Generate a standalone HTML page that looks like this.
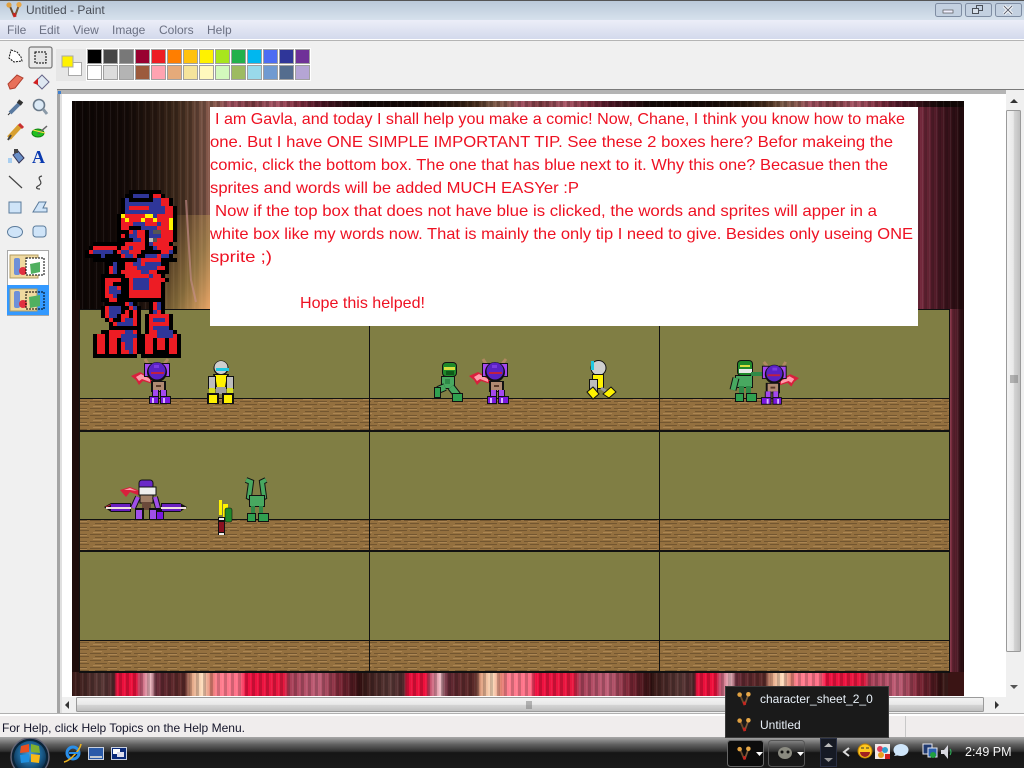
<!DOCTYPE html>
<html lang="en"><head><meta charset="utf-8"><title>Untitled - Paint</title>
<style>html,body{margin:0;padding:0;width:1024px;height:768px;overflow:hidden;background:#f0f0f0}svg{display:block}text{font-family:"Liberation Sans",sans-serif}</style>
</head><body>
<svg xmlns="http://www.w3.org/2000/svg" width="1024" height="768" viewBox="0 0 1024 768">
<defs>
<linearGradient id="title" x1="0" y1="0" x2="0" y2="1"><stop offset="0" stop-color="#b9c8d8"/><stop offset="1" stop-color="#d6e1ec"/></linearGradient>
<linearGradient id="menu" x1="0" y1="0" x2="0" y2="1"><stop offset="0" stop-color="#eceef8"/><stop offset="1" stop-color="#d3d9ec"/></linearGradient>
<linearGradient id="sbv" x1="0" y1="0" x2="1" y2="0"><stop offset="0" stop-color="#f4f4f4"/><stop offset=".5" stop-color="#e8e8e8"/><stop offset=".55" stop-color="#d4d4d4"/><stop offset="1" stop-color="#bdbdbd"/></linearGradient>
<linearGradient id="sbh" x1="0" y1="0" x2="0" y2="1"><stop offset="0" stop-color="#f4f4f4"/><stop offset=".5" stop-color="#e8e8e8"/><stop offset=".55" stop-color="#d4d4d4"/><stop offset="1" stop-color="#bdbdbd"/></linearGradient>
<linearGradient id="task" x1="0" y1="0" x2="0" y2="1"><stop offset="0" stop-color="#a8a8a8"/><stop offset=".25" stop-color="#5e5e5e"/><stop offset=".46" stop-color="#303030"/><stop offset=".5" stop-color="#161616"/><stop offset="1" stop-color="#1a1a1a"/></linearGradient>
<linearGradient id="top" gradientUnits="userSpaceOnUse" x1="72" y1="0" x2="362" y2="0" spreadMethod="repeat">
<stop offset="0" stop-color="#120806"/><stop offset=".2" stop-color="#150a08"/><stop offset=".33" stop-color="#2a1a10"/><stop offset=".4" stop-color="#4a3020"/><stop offset=".45" stop-color="#7a5a48"/><stop offset=".5" stop-color="#8a5a50"/><stop offset=".55" stop-color="#a05060"/><stop offset=".62" stop-color="#7a3a40"/><stop offset=".7" stop-color="#a85868"/><stop offset=".78" stop-color="#803040"/><stop offset=".85" stop-color="#501828"/><stop offset="1" stop-color="#120806"/></linearGradient>
<linearGradient id="bot" gradientUnits="userSpaceOnUse" x1="72" y1="0" x2="362" y2="0" spreadMethod="repeat">
<stop offset="0" stop-color="#3a1a18"/><stop offset=".1" stop-color="#5a3a38"/><stop offset=".145" stop-color="#50282c"/><stop offset=".155" stop-color="#e8103c"/><stop offset=".22" stop-color="#f0103c"/><stop offset=".23" stop-color="#c04060"/><stop offset=".27" stop-color="#f0c0c8"/><stop offset=".29" stop-color="#703040"/><stop offset=".31" stop-color="#602830"/><stop offset=".39" stop-color="#5a2a28"/><stop offset=".41" stop-color="#e0a080"/><stop offset=".45" stop-color="#ffe0c0"/><stop offset=".48" stop-color="#e08070"/><stop offset=".5" stop-color="#ff8090"/><stop offset=".58" stop-color="#ff7088"/><stop offset=".6" stop-color="#f01040"/><stop offset=".73" stop-color="#e81840"/><stop offset=".75" stop-color="#a84058"/><stop offset=".85" stop-color="#c06078"/><stop offset=".92" stop-color="#802838"/><stop offset="1" stop-color="#301010"/></linearGradient>
<linearGradient id="leftg" x1="0" y1="0" x2="1" y2="0"><stop offset="0" stop-color="#0c0504"/><stop offset=".4" stop-color="#150b08"/><stop offset=".62" stop-color="#2a1a12"/><stop offset=".75" stop-color="#3e2a1c"/><stop offset=".85" stop-color="#54392a"/><stop offset=".95" stop-color="#775244"/><stop offset="1" stop-color="#8a5a4c"/></linearGradient>
<linearGradient id="leftlow" x1="0" y1="0" x2="1" y2="1"><stop offset="0" stop-color="#c09050" stop-opacity="0"/><stop offset=".6" stop-color="#b89a50" stop-opacity=".55"/><stop offset="1" stop-color="#f0a868" stop-opacity=".95"/></linearGradient>
<linearGradient id="rightg" x1="0" y1="0" x2="1" y2="0"><stop offset="0" stop-color="#7a2c40"/><stop offset=".45" stop-color="#4a1824"/><stop offset="1" stop-color="#200a0c"/></linearGradient>
<linearGradient id="rightb" x1="0" y1="0" x2="1" y2="0"><stop offset="0" stop-color="#8a3448"/><stop offset=".5" stop-color="#501c28"/><stop offset="1" stop-color="#200a0c"/></linearGradient>
<pattern id="streak" width="7" height="11" patternUnits="userSpaceOnUse"><rect width="3" height="11" fill="#000" opacity=".18"/><rect x="5" width="1" height="11" fill="#fff" opacity=".06"/></pattern>
<pattern id="brick" width="30" height="7" patternUnits="userSpaceOnUse"><rect width="30" height="7" fill="#94703f"/><rect y="2" width="11" height="1" fill="#735630"/><rect x="14" y="2" width="13" height="1" fill="#735630"/><rect x="5" y="5" width="12" height="1" fill="#735630"/><rect x="20" y="5" width="9" height="1" fill="#735630"/><rect x="3" y="0" width="9" height="1" fill="#ab8552"/><rect x="18" y="3" width="9" height="1" fill="#ab8552"/></pattern>
<radialGradient id="orb" cx=".5" cy=".4" r=".6"><stop offset="0" stop-color="#4a9ad0"/><stop offset=".6" stop-color="#1b5f90"/><stop offset="1" stop-color="#0b2c48"/></radialGradient>
<clipPath id="tb"><rect x="0" y="738" width="100" height="30"/></clipPath>

<symbol id="pb" viewBox="0 0 16 16" overflow="visible">
<path d="M3 2 8 14" stroke="#6b4a2a" stroke-width="2"/><path d="M13 3 9 14" stroke="#7a5a3a" stroke-width="2"/><path d="M8 11 9 15" stroke="#c8231f" stroke-width="3"/>
<circle cx="3" cy="3" r="2.6" fill="#e0a040"/><circle cx="13" cy="2.6" r="2.6" fill="#e8a848"/>
</symbol>

<symbol id="gavla" viewBox="0 0 40 46" overflow="visible">
<polygon points="0,18 9,14 21,20 22,26 12,23 8,27 5,22" fill="#d8203c"/><polygon points="5,19 10,16 19,21 19,24 11,21 8,23" fill="#ff9caa"/>
<path d="M14 1l3 5M37 1l-4 5" stroke="#b08860" stroke-width="3"/>
<rect x="13" y="5" width="8" height="14" fill="#111"/><rect x="14" y="6" width="6" height="12" fill="#a448f0"/>
<rect x="31" y="5" width="8" height="14" fill="#111"/><rect x="32" y="6" width="6" height="12" fill="#a448f0"/>
<circle cx="26" cy="14" r="10" fill="#111"/><circle cx="26" cy="13" r="8.5" fill="#5a22c4"/><rect x="20" y="14" width="13" height="2" fill="#c02040"/><rect x="23" y="7" width="5" height="3" fill="#7a3ae0"/>
<rect x="20" y="23" width="15" height="11" fill="#111"/><rect x="22" y="24" width="11" height="9" fill="#b08a72"/><rect x="25" y="27" width="5" height="2" fill="#5a3a2a"/>
<rect x="21" y="32" width="7" height="9" fill="#111"/><rect x="22" y="32" width="5" height="8" fill="#a448f0"/><rect x="29" y="32" width="7" height="9" fill="#111"/><rect x="30" y="32" width="5" height="8" fill="#a448f0"/>
<rect x="18" y="38" width="10" height="8" fill="#111"/><rect x="19" y="39" width="8" height="6" fill="#7a18e0"/><rect x="21" y="40" width="2" height="5" fill="#d8b0ff"/>
<rect x="29" y="38" width="11" height="8" fill="#111"/><rect x="30" y="39" width="9" height="6" fill="#7a18e0"/><rect x="32" y="40" width="2" height="5" fill="#d8b0ff"/>
</symbol>

<symbol id="yel" viewBox="0 0 28 44" overflow="visible">
<circle cx="14" cy="8" r="7.5" fill="#111"/><circle cx="14" cy="7.5" r="6.5" fill="#cfcfcf"/><rect x="9" y="8" width="13" height="3" fill="#22c8e0"/>
<polygon points="6,14 22,14 19,28 9,28" fill="#111"/><polygon points="8,15 20,15 18,27 10,27" fill="#fff200"/>
<rect x="1" y="16" width="8" height="13" fill="#111"/><rect x="2" y="17" width="6" height="11" fill="#bdbdbd"/><rect x="19" y="16" width="8" height="13" fill="#111"/><rect x="20" y="17" width="6" height="11" fill="#bdbdbd"/>
<rect x="2" y="28" width="6" height="5" fill="#d8e020"/><rect x="20" y="28" width="6" height="5" fill="#d8e020"/>
<rect x="9" y="27" width="10" height="7" fill="#a0a0a0"/>
<rect x="0" y="33" width="12" height="11" fill="#111"/><rect x="2" y="35" width="8" height="8" fill="#fff200"/><rect x="15" y="33" width="12" height="11" fill="#111"/><rect x="17" y="35" width="8" height="8" fill="#fff200"/>
</symbol>

<symbol id="grn" viewBox="0 0 30 40" overflow="visible">
<rect x="8" y="0" width="15" height="15" rx="4" fill="#111"/><rect x="9" y="1" width="13" height="13" rx="3" fill="#1f8a2a"/><rect x="10" y="5" width="11" height="3" fill="#d8e040"/><rect x="12" y="9" width="8" height="4" fill="#0f5a1a"/>
<rect x="7" y="14" width="14" height="13" fill="#111"/><rect x="8" y="15" width="12" height="11" fill="#48a860"/><rect x="11" y="17" width="5" height="5" fill="#2f8a48"/>
<path d="M11 25 4 28" stroke="#111" stroke-width="8"/><path d="M11 25 4 28" stroke="#48a860" stroke-width="6"/>
<path d="M17 25 24 34" stroke="#111" stroke-width="8"/><path d="M17 25 24 34" stroke="#48a860" stroke-width="6"/>
<rect x="0" y="25" width="7" height="11" fill="#111"/><rect x="1" y="26" width="5" height="9" fill="#30a050"/>
<rect x="18" y="31" width="11" height="9" fill="#111"/><rect x="19" y="32" width="9" height="7" fill="#30a050"/>
</symbol>
</defs>

<!-- base -->
<rect width="1024" height="768" fill="#f0f0f0"/>
<rect width="1024" height="20" fill="url(#title)"/>
<rect width="1024" height="1" fill="#555"/>
<rect y="20" width="1024" height="19" fill="url(#menu)"/>
<rect y="39" width="1024" height="1" fill="#fff"/>
<rect y="40" width="1024" height="1" fill="#b4b4b4"/>
<use href="#pb" x="6" y="2" width="16" height="16"/>
<text x="26" y="14" font-size="12" fill="#4a4f58">Untitled - Paint</text>
<g font-size="12" fill="#6b7082">
<text x="7" y="34">File</text><text x="39" y="34">Edit</text><text x="73" y="34">View</text><text x="112" y="34">Image</text><text x="159" y="34">Colors</text><text x="207" y="34">Help</text>
</g>
<!-- window buttons -->
<g fill="#c3d0e0" stroke="#7f8da3"><rect x="935.5" y="3.5" width="26" height="13" rx="2"/><rect x="965.5" y="3.5" width="26" height="13" rx="2"/><rect x="995.5" y="3.5" width="26" height="13" rx="2"/></g>
<rect x="943" y="10" width="10" height="3" fill="#eef" stroke="#555" stroke-width=".7"/>
<g fill="none" stroke="#4a4f58"><rect x="976.5" y="5.5" width="6" height="5"/><rect x="972.5" y="8.5" width="6" height="5" fill="#d8e0ea"/></g>
<path d="M1004 6 1012 14M1012 6 1004 14" stroke="#fff" stroke-width="3"/><path d="M1004 6 1012 14M1012 6 1004 14" stroke="#5a6070" stroke-width="1"/>

<!-- palette -->
<rect x="86" y="48" width="225" height="33" fill="#fff"/>
<rect x="56" y="49" width="30" height="32" fill="#e6e6e6"/>
<rect x="68.5" y="62.5" width="13" height="13" fill="#fff" stroke="#a8a8a8"/>
<rect x="62" y="56" width="11" height="11" fill="#fff200" stroke="#a8a8a8"/>
<g stroke="#a0a0a0" shape-rendering="crispEdges">
<rect x="87.5" y="49.5" width="14" height="14" fill="#000"/><rect x="103.5" y="49.5" width="14" height="14" fill="#464646"/><rect x="119.5" y="49.5" width="14" height="14" fill="#787878"/><rect x="135.5" y="49.5" width="14" height="14" fill="#990030"/><rect x="151.5" y="49.5" width="14" height="14" fill="#ed1c24"/><rect x="167.5" y="49.5" width="14" height="14" fill="#ff7e00"/><rect x="183.5" y="49.5" width="14" height="14" fill="#ffc20e"/><rect x="199.5" y="49.5" width="14" height="14" fill="#fff200"/><rect x="215.5" y="49.5" width="14" height="14" fill="#a8e61d"/><rect x="231.5" y="49.5" width="14" height="14" fill="#22b14c"/><rect x="247.5" y="49.5" width="14" height="14" fill="#00b7ef"/><rect x="263.5" y="49.5" width="14" height="14" fill="#4d6df3"/><rect x="279.5" y="49.5" width="14" height="14" fill="#2f3699"/><rect x="295.5" y="49.5" width="14" height="14" fill="#6f3198"/>
<rect x="87.5" y="65.5" width="14" height="14" fill="#fff"/><rect x="103.5" y="65.5" width="14" height="14" fill="#dcdcdc"/><rect x="119.5" y="65.5" width="14" height="14" fill="#b4b4b4"/><rect x="135.5" y="65.5" width="14" height="14" fill="#9c5a3c"/><rect x="151.5" y="65.5" width="14" height="14" fill="#ffa3b1"/><rect x="167.5" y="65.5" width="14" height="14" fill="#e5aa7a"/><rect x="183.5" y="65.5" width="14" height="14" fill="#f5e49c"/><rect x="199.5" y="65.5" width="14" height="14" fill="#fff9bd"/><rect x="215.5" y="65.5" width="14" height="14" fill="#d3f9bc"/><rect x="231.5" y="65.5" width="14" height="14" fill="#9dbb61"/><rect x="247.5" y="65.5" width="14" height="14" fill="#99d9ea"/><rect x="263.5" y="65.5" width="14" height="14" fill="#709ad1"/><rect x="279.5" y="65.5" width="14" height="14" fill="#546d8e"/><rect x="295.5" y="65.5" width="14" height="14" fill="#b5a5d5"/>
</g>

<!-- left toolbar edge (starts at canvas top) -->
<rect x="57" y="89" width="3" height="624" fill="#a4a4a4"/><rect x="60" y="94" width="2" height="619" fill="#e0e0e0"/>
<!-- canvas area -->
<rect x="57" y="90" width="949" height="4" fill="#b4b4b4"/>
<rect x="57" y="89" width="967" height="1" fill="#7a7a7a"/>
<rect x="62" y="94" width="944" height="603" fill="#fff"/>
<rect x="58" y="91" width="3" height="3" fill="#3d7fd0"/>

<!-- image -->
<rect x="72" y="101" width="892" height="595" fill="url(#top)"/>
<rect x="72" y="101" width="892" height="595" fill="url(#streak)"/>
<rect x="72" y="101" width="138" height="210" fill="url(#leftg)"/>
<rect x="72" y="101" width="138" height="210" fill="url(#streak)"/>
<rect x="165" y="215" width="45" height="95" fill="url(#leftlow)"/>
<path d="M186 200 191 280 196 302" stroke="#c89090" stroke-width="2" fill="none" opacity=".6"/>
<rect x="72" y="300" width="8" height="380" fill="#1d0c0b"/>
<rect x="918" y="107" width="46" height="204" fill="url(#rightg)"/>
<rect x="918" y="107" width="46" height="204" fill="url(#streak)"/>
<rect x="949" y="309" width="15" height="373" fill="url(#rightb)"/>
<rect x="949" y="309" width="15" height="373" fill="url(#streak)"/>
<rect x="72" y="672" width="892" height="24" fill="url(#bot)"/>
<rect x="72" y="672" width="892" height="24" fill="url(#streak)"/>
<rect x="948" y="672" width="16" height="24" fill="#3a1414"/>

<!-- panels -->
<g shape-rendering="crispEdges">
<rect x="80" y="309" width="869" height="363" fill="#807e44"/>
<rect x="80" y="399" width="869" height="31" fill="url(#brick)"/>
<rect x="80" y="519" width="869" height="31" fill="url(#brick)"/>
<rect x="80" y="641" width="869" height="30" fill="url(#brick)"/>
<g fill="#111">
<rect x="79" y="309" width="871" height="1"/><rect x="79" y="398" width="871" height="1"/><rect x="79" y="430" width="871" height="2"/><rect x="79" y="519" width="871" height="1"/><rect x="79" y="550" width="871" height="2"/><rect x="79" y="640" width="871" height="1"/><rect x="79" y="671" width="871" height="2"/>
<rect x="79" y="309" width="1" height="364"/><rect x="369" y="309" width="1" height="364"/><rect x="659" y="309" width="1" height="364"/><rect x="949" y="309" width="1" height="364"/>
</g>
</g>

<!-- speech box -->
<rect x="210" y="107" width="708" height="219" fill="#fff"/>
<g font-size="16" fill="#ee1122">
<text x="215" y="124" textLength="690" lengthAdjust="spacingAndGlyphs">I am Gavla, and today I shall help you make a comic! Now, Chane, I think you know how to make</text>
<text x="210" y="147" textLength="683" lengthAdjust="spacingAndGlyphs">one. But I have ONE SIMPLE IMPORTANT TIP. See these 2 boxes here? Befor makeing the</text>
<text x="210" y="170" textLength="678" lengthAdjust="spacingAndGlyphs">comic, click the bottom box. The one that has blue next to it. Why this one? Becasue then the</text>
<text x="210" y="193" textLength="369" lengthAdjust="spacingAndGlyphs">sprites and words will be added MUCH EASYer :P</text>
<text x="215" y="216" textLength="662" lengthAdjust="spacingAndGlyphs">Now if the top box that does not have blue is clicked, the words and sprites will apper in a</text>
<text x="210" y="239" textLength="703" lengthAdjust="spacingAndGlyphs">white box like my words now. That is mainly the only tip I need to give. Besides only useing ONE</text>
<text x="210" y="262" textLength="62" lengthAdjust="spacingAndGlyphs">sprite ;)</text>
<text x="300" y="308" textLength="125" lengthAdjust="spacingAndGlyphs">Hope this helped!</text>
</g>

<!-- big robot -->
<g transform="translate(85 190) scale(4)" fill="none" stroke-width="1">
<path stroke="#000" d="M11 .5h8M10 1.5h10M9 2.5h13M9 3.5h13M9 4.5h14M9 5.5h14M8 6.5h15M8 7.5h15M8 8.5h15M8 9.5h15M8 10.5h15M8 11.5h15M8 12.5h15M2 13.5h20M1 14.5h22M0 15.5h23M0 16.5h22M2 17.5h21M5 18.5h16M5 19.5h16M5 20.5h16M4 21.5h16M4 22.5h17M4 23.5h16M4 24.5h16M4 25.5h16M4 26.5h16M4 27.5h16M5 28.5h8M16 28.5h4M4 29.5h10M16 29.5h4M4 30.5h10M16 30.5h4M4 31.5h10M15 31.5h7M5 32.5h9M15 32.5h7M6 33.5h8M15 33.5h7M6 34.5h8M15 34.5h7M4 35.5h10M15 35.5h8M2 36.5h22M2 37.5h22M2 38.5h22M2 39.5h22M2 40.5h22M2 41.5h11M14 41.5h10"/>
<path stroke="#ed1c24" d="M17 1.5h2M19 2.5h2M19 3.5h2M11 4.5h5M20 4.5h2M20 5.5h2M10 6.5h5M18 6.5h4M9 7.5h1M11 7.5h3M15 7.5h2M18 7.5h3M9 8.5h3M15 8.5h3M19 8.5h2M9 9.5h2M18 9.5h3M11 10.5h1M13 10.5h2M19 10.5h3M9 11.5h1M13 11.5h2M19 11.5h3M14 12.5h1M18 12.5h4M10 13.5h5M17 13.5h4M2 14.5h6M9 14.5h2M12 14.5h3M18 14.5h4M1 15.5h1M8 15.5h1M11 15.5h3M19 15.5h2M9 16.5h1M12 16.5h1M18 16.5h1M14 17.5h5M10 18.5h2M14 18.5h1M6 19.5h1M10 19.5h3M18 19.5h2M6 20.5h1M9 20.5h5M16 20.5h2M10 21.5h6M17 21.5h2M5 22.5h4M11 22.5h1M16 22.5h4M5 23.5h2M11 23.5h1M16 23.5h3M5 24.5h1M8 24.5h1M11 24.5h1M16 24.5h3M5 25.5h1M11 25.5h8M5 26.5h2M11 26.5h8M6 27.5h2M10 28.5h1M17 28.5h1M5 29.5h1M11 29.5h1M17 29.5h1M5 30.5h1M10 30.5h1M12 30.5h1M18 30.5h1M5 31.5h1M9 31.5h2M12 31.5h1M16 31.5h5M6 32.5h1M9 32.5h1M12 32.5h1M16 32.5h1M20 32.5h1M7 33.5h1M12 33.5h1M16 33.5h5M16 34.5h1M6 35.5h4M12 35.5h1M16 35.5h2M3 36.5h2M6 36.5h3M15 36.5h3M22 36.5h1M3 37.5h2M6 37.5h2M12 37.5h1M15 37.5h2M18 37.5h2M21 37.5h2M3 38.5h2M6 38.5h2M9 38.5h1M12 38.5h1M15 38.5h2M18 38.5h2M21 38.5h2M3 39.5h2M6 39.5h2M9 39.5h1M12 39.5h1M15 39.5h2M18 39.5h2M21 39.5h2M3 40.5h2M6 40.5h2M9 40.5h2M12 40.5h1M15 40.5h2M21 40.5h2"/>
<path stroke="#2f3699" d="M12 1.5h4M10 2.5h1M17 2.5h2M10 3.5h9M10 4.5h1M16 4.5h4M10 5.5h10M17 6.5h1M12 8.5h3M18 8.5h1M14 9.5h4M12 10.5h1M16 10.5h1M11 11.5h2M16 11.5h3M12 12.5h2M16 13.5h1M11 14.5h1M17 14.5h1M2 15.5h5M9 15.5h2M21 15.5h1M4 16.5h1M10 16.5h2M15 16.5h3M19 16.5h2M13 17.5h1M7 18.5h1M12 18.5h2M15 18.5h4M7 19.5h1M13 19.5h5M7 20.5h1M14 20.5h2M16 21.5h1M12 22.5h4M12 23.5h4M6 24.5h2M12 24.5h4M6 25.5h3M7 26.5h1M11 28.5h1M18 28.5h1M6 29.5h3M12 29.5h1M18 29.5h1M6 30.5h3M17 30.5h1M6 31.5h2M10 32.5h2M17 32.5h3M8 33.5h4M17 34.5h4M10 35.5h2M18 35.5h4M9 36.5h4M18 36.5h4M9 37.5h3M10 38.5h2M10 39.5h2M11 40.5h1"/>
<path stroke="#fff200" d="M9 6.5h1M15 6.5h2M10 7.5h1M14 7.5h1M17 7.5h1M21 7.5h1M21 8.5h1M21 9.5h1"/>
<path stroke="#555" d="M17 10.5h2M17 12.5h1"/>
<path stroke="#bdbdbd" d="M16 12.5h1"/>
</g>

<!-- sprites -->
<use href="#gavla" x="131" y="358" width="40" height="46"/>
<use href="#yel" x="207" y="360" width="28" height="44"/>
<use href="#grn" x="434" y="362" width="30" height="40"/>
<use href="#gavla" x="469" y="358" width="40" height="46"/>
<!-- yellow walking -->
<g>
<circle cx="598.500" cy="368" r="8" fill="#111"/><circle cx="598.500" cy="368" r="7" fill="#cfcfcf"/><rect x="591" y="361" width="3" height="9" fill="#22c8e0"/>
<rect x="592" y="374" width="12" height="15" fill="#111"/><rect x="593" y="375" width="10" height="13" fill="#fff200"/>
<rect x="589" y="379" width="9" height="13" fill="#111"/><rect x="590" y="380" width="7" height="11" fill="#bdbdbd"/>
<path d="M596 388 592 392" stroke="#999" stroke-width="3"/><path d="M601 388 607 392" stroke="#999" stroke-width="3"/>
<polygon points="587,392 593,387 599,394 593,399" fill="#fff200" stroke="#111"/><polygon points="603,394 611,387 616,392 609,398" fill="#fff200" stroke="#111"/>
</g>
<!-- green big, right panel -->
<g>
<rect x="737" y="360" width="16" height="16" rx="4" fill="#111"/><rect x="738" y="361" width="14" height="14" rx="3" fill="#1f8a2a"/><rect x="739" y="369" width="13" height="4" fill="#e8e8e8"/><rect x="740" y="365" width="10" height="2" fill="#d8e040"/>
<rect x="735" y="375" width="18" height="13" fill="#111"/><rect x="736" y="376" width="16" height="11" fill="#48a860"/>
<rect x="751" y="372" width="15" height="4" fill="#2f8a48"/>
<path d="M736 378 733 390" stroke="#111" stroke-width="7"/><path d="M736 378 733 390" stroke="#48a860" stroke-width="5"/>
<rect x="739" y="386" width="5" height="8" fill="#2f8a48"/><rect x="746" y="386" width="5" height="8" fill="#2f8a48"/>
<rect x="735" y="393" width="9" height="9" fill="#111"/><rect x="736" y="394" width="7" height="7" fill="#30a050"/><rect x="746" y="393" width="11" height="9" fill="#111"/><rect x="747" y="394" width="9" height="7" fill="#30a050"/>
</g>
<g transform="translate(799 361) scale(-.95 .95)"><use href="#gavla" x="0" y="0" width="40" height="46"/></g>
<!-- hooded gavla with blades -->
<polygon points="120,490 130,487 140,491 138,495 130,492 126,497" fill="#d8203c"/><polygon points="124,490 130,488 137,491 130,490" fill="#ff9caa"/>
<rect x="139" y="480" width="14" height="9" rx="3" fill="#6a28c8" stroke="#111"/><rect x="139" y="487" width="17" height="8" fill="#eee" stroke="#111"/>
<rect x="140" y="495" width="13" height="8" fill="#a08068" stroke="#111"/>
<path d="M138 497 133 508M155 497 158 508" stroke="#111" stroke-width="6"/><path d="M138 497 133 508M155 497 158 508" stroke="#a050e8" stroke-width="4"/>
<rect x="142" y="502" width="9" height="8" fill="#6a4a3a"/>
<rect x="135" y="508" width="9" height="12" fill="#111"/><rect x="136" y="510" width="6" height="9" fill="#a050e8"/>
<rect x="149" y="508" width="15" height="12" fill="#111"/><rect x="150" y="510" width="6" height="9" fill="#a050e8"/><rect x="157" y="512" width="6" height="7" fill="#7a18e0"/>
<g>
<polygon points="104,507 111,503 131,503 131,512 111,512" fill="#111"/><rect x="111" y="504" width="19" height="7" fill="#6a1fc0"/><rect x="106" y="507" width="25" height="2" fill="#f0e0e0"/><polygon points="105,507 111,504 111,505 107,507" fill="#d02030"/>
<polygon points="187,507 180,503 161,503 161,512 180,512" fill="#111"/><rect x="162" y="504" width="19" height="7" fill="#6a1fc0"/><rect x="161" y="507" width="25" height="2" fill="#f0e0e0"/>
</g>
<!-- red / yellow thing -->
<rect x="219" y="500" width="3" height="15" fill="#fff200"/><rect x="223" y="504" width="5" height="13" fill="#fff200"/>
<rect x="225" y="508" width="7" height="14" rx="2" fill="#1f8a2a" stroke="#111" stroke-width=".6"/>
<rect x="218" y="517" width="7" height="18" fill="#111"/><rect x="219" y="522" width="5" height="10" fill="#8a1020"/><rect x="219" y="518" width="5" height="2" fill="#eee"/><rect x="219" y="533" width="5" height="2" fill="#eee"/>
<!-- green arms up -->
<g>
<path d="M246 480 251 482 249 497 255 500M266 480 262 482 264 497 258 500" fill="none" stroke="#111" stroke-width="6"/>
<path d="M246 480 251 482 249 497 255 500M266 480 262 482 264 497 258 500" fill="none" stroke="#48a860" stroke-width="4"/>
<rect x="249" y="495" width="16" height="12" fill="#111"/><rect x="250" y="496" width="14" height="10" fill="#48a860"/>
<rect x="251" y="506" width="4" height="8" fill="#2f8a48"/><rect x="259" y="506" width="4" height="8" fill="#2f8a48"/>
<rect x="247" y="513" width="9" height="9" fill="#111"/><rect x="248" y="514" width="7" height="7" fill="#30a050"/><rect x="258" y="513" width="11" height="9" fill="#111"/><rect x="259" y="514" width="9" height="7" fill="#30a050"/>
</g>

<!-- tools -->
<rect x="29" y="47" width="23" height="21" rx="2" fill="#e8e8e8" stroke="#777" stroke-width="1.2"/>
<rect x="35" y="52" width="11" height="11" fill="#e2e2e2" stroke="#000" stroke-dasharray="2 1"/>
<path d="M11 50 17 52 21 57 22 61 14 62 9 58Z" fill="#fff" stroke="#111" stroke-dasharray="2 1"/>
<polygon points="8,84 17,75 23,78 15,88 10,89" fill="#e8705a" stroke="#b04030"/>
<polygon points="35,82 42,75 49,82 42,89" fill="#dfe8f2" stroke="#668"/><path d="M33 83 38 78 38 85Z" fill="#d02020"/>
<path d="M10 113 20 103" stroke="#5a7aa0" stroke-width="4"/><path d="M18 101 22 104" stroke="#333" stroke-width="4"/><path d="M8 115 10 113" stroke="#333"/>
<circle cx="39" cy="105" r="5.5" fill="#dceaf6" stroke="#6a7a8a" stroke-width="1.6"/><path d="M43 109 47 114" stroke="#8a9aa8" stroke-width="3"/>
<path d="M9 138 20 126" stroke="#d8a030" stroke-width="5"/><path d="M8 140 11 135" stroke="#444" stroke-width="2"/><path d="M19 124 23 128" stroke="#c83030" stroke-width="3"/>
<ellipse cx="38" cy="133" rx="6" ry="4" fill="#20c020" stroke="#108010"/><path d="M38 134 47 126" stroke="#666" stroke-width="1.5"/><path d="M33 130 45 133" stroke="#ffe040" stroke-width="1"/>
<path d="M13 155 18 151 24 158 19 163Z" fill="#6a90c8" stroke="#335"/><rect x="8" y="158" width="4" height="5" fill="#8ac0f0" opacity=".7"/><rect x="14" y="149" width="4" height="4" fill="#444"/>
<text x="32" y="163" font-size="18" font-weight="bold" fill="#0a3ab0" style="font-family:'Liberation Serif',serif">A</text>
<path d="M9 176 22 188" stroke="#444" stroke-width="1.2"/>
<path d="M42 176 C34 178 46 182 38 186 C35 188 37 189 40 189" fill="none" stroke="#444" stroke-width="1.2"/>
<rect x="9" y="202" width="12" height="11" fill="#cfe4f8" stroke="#5a7a9a"/>
<polygon points="33,212 39,202 46,202 43,208 47,208 47,212" fill="#cfe4f8" stroke="#5a7a9a"/>
<ellipse cx="15" cy="232" rx="7.5" ry="5.5" fill="#cfe4f8" stroke="#5a7a9a"/>
<rect x="33" y="226" width="13" height="11" rx="3" fill="#cfe4f8" stroke="#5a7a9a"/>
<rect x="7.5" y="250.5" width="41" height="65" fill="#fff" stroke="#a8a8a8"/>
<rect x="7" y="285" width="42" height="30" fill="#3399ff"/>
<g>
<rect x="10" y="255" width="28" height="23" fill="#efd9a0" stroke="#b09a60"/><rect x="14" y="258" width="6" height="17" rx="2" fill="#6f90d8"/><circle cx="23" cy="271" r="4" fill="#e03040"/><rect x="26" y="258" width="18" height="17" fill="#fff" stroke="#000" stroke-dasharray="2 1"/><path d="M30 264 40 262V272L31 274Z" fill="#50b060"/>
<rect x="10" y="289" width="27" height="22" fill="#efd9a0" stroke="#b09a60"/><rect x="14" y="291" width="6" height="17" rx="2" fill="#6f90d8"/><circle cx="23" cy="304" r="4" fill="#e03040"/><rect x="26" y="292" width="18" height="17" fill="none" stroke="#000" stroke-dasharray="2 1"/><path d="M29 297 40 295V306L30 308Z" fill="#50b060"/>
</g>

<!-- vertical scrollbar -->
<rect x="1006" y="94" width="15" height="603" fill="#f0f0f0"/>
<rect x="1006.5" y="110.5" width="14" height="541" rx="1" fill="url(#sbv)" stroke="#9a9a9a"/>
<path d="M1010 103h8l-4-4Z" fill="#333"/><path d="M1010 685h8l-4 4Z" fill="#555"/>
<path d="M1010 376h8M1010 378h8M1010 380h8M1010 382h8" stroke="#777"/>
<!-- horizontal scrollbar -->
<rect x="62" y="697" width="959" height="16" fill="#f0f0f0"/>
<rect x="76.5" y="697.5" width="907" height="14" rx="1" fill="url(#sbh)" stroke="#9a9a9a"/>
<path d="M69 701v8l-4-4Z" fill="#333"/><path d="M995 701v8l4-4Z" fill="#333"/>
<path d="M527 701v8M529 701v8M531 701v8" stroke="#777"/>

<!-- status bar -->
<rect y="713" width="1024" height="3" fill="#fff"/>
<rect y="713" width="1024" height="1" fill="#b0b0b0"/>
<rect y="716" width="1024" height="21" fill="#f0eded"/>
<rect x="905" y="716" width="1" height="21" fill="#c8c8c8"/>
<text x="2" y="732" font-size="12" fill="#15152a" textLength="243" lengthAdjust="spacingAndGlyphs">For Help, click Help Topics on the Help Menu.</text>

<!-- taskbar -->
<rect y="737" width="1024" height="31" fill="url(#task)"/>
<g clip-path="url(#tb)">
<circle cx="30" cy="757" r="19" fill="#0a2438" stroke="#667" stroke-width="1.4"/>
<circle cx="30" cy="757" r="16" fill="url(#orb)"/>
<path d="M21 746 29 744 29 752 20 753Z" fill="#e85020"/><path d="M31 744 39 746 40 753 31 752Z" fill="#80b030"/>
<path d="M20 755 29 754 29 762 21 763Z" fill="#2090e0"/><path d="M31 754 40 755 39 763 31 762Z" fill="#f8b818"/>
</g>
<g>
<circle cx="73" cy="753" r="6" fill="none" stroke="#2a8ee8" stroke-width="3"/><path d="M64 762C70 761 80 750 81 744" fill="none" stroke="#e8b020" stroke-width="1.6"/><rect x="69" y="752" width="9" height="2" fill="#2a8ee8"/>
<rect x="88.500" y="747.500" width="15" height="12" fill="#2a5aa8" stroke="#c8d0e0"/><rect x="90" y="756" width="12" height="2" fill="#c0c8d0"/>
<rect x="111.500" y="747.500" width="15" height="12" fill="#0a2a7a" stroke="#c8d0e0"/><rect x="113" y="749" width="7" height="5" fill="#fff"/><rect x="117" y="752" width="7" height="5" fill="#dde"/>
</g>

<!-- popup -->
<rect x="725.500" y="686.500" width="163" height="51" fill="#1a1a1a" stroke="#3a3a3a"/>
<use href="#pb" x="737" y="692" width="14" height="14"/>
<use href="#pb" x="737" y="718" width="14" height="14"/>
<text x="760" y="703" font-size="12" fill="#e8f0f8">character_sheet_2_0</text>
<text x="760" y="729" font-size="12" fill="#e8f0f8">Untitled</text>

<!-- task buttons -->
<rect x="727.500" y="740.500" width="36" height="26" rx="3" fill="#0c0c0c" stroke="#666"/>
<use href="#pb" x="737" y="746" width="14" height="15"/><path d="M756 752h7l-3.500 4Z" fill="#fff"/>
<rect x="768.500" y="740.500" width="36" height="26" rx="3" fill="none" stroke="#555"/>
<ellipse cx="785" cy="753" rx="7" ry="6" fill="#8a8a80"/><circle cx="782" cy="752" r="1.500" fill="#111"/><circle cx="788" cy="752" r="1.500" fill="#111"/><path d="M797 752h7l-3.500 4Z" fill="#fff"/>
<rect x="820.500" y="738.500" width="16" height="28" fill="#161a24" stroke="#2a3044"/>
<path d="M824 747h9l-4.500-4Z" fill="#bbb"/><path d="M824 758h9l-4.500 4Z" fill="#999"/>
<!-- tray -->
<path d="M849 748 844 752 849 756" fill="none" stroke="#ddd" stroke-width="2"/>
<circle cx="865" cy="751" r="7" fill="#ffc820" stroke="#c08000"/><path d="M860 752h10a5 5 0 0 1-10 0Z" fill="#a02020"/><path d="M861 748h3M866 748h3" stroke="#333"/>
<rect x="875" y="744" width="15" height="15" fill="#f0e8e8"/><circle cx="880" cy="749" r="3" fill="#e04060"/><circle cx="885" cy="750" r="3" fill="#30a0d0"/><circle cx="881" cy="755" r="3" fill="#e8a020"/><rect x="885" y="754" width="5" height="5" fill="#d02020"/>
<ellipse cx="901" cy="750" rx="7.500" ry="6" fill="#cfe6fa"/><path d="M894 756 897 752 900 755Z" fill="#cfe6fa"/>
<rect x="923" y="744" width="9" height="10" fill="#203a70" stroke="#e8e8f0"/><rect x="928" y="748" width="9" height="9" fill="#2a60b0" stroke="#e8e8f0"/><circle cx="933" cy="755" r="3" fill="#20a040"/>
<path d="M941 750h3l4-5v14l-4-5h-3Z" fill="#d8d8e0"/><path d="M950 749q2 3 0 6" fill="none" stroke="#30c060"/>
<text x="965" y="756" font-size="12.500" fill="#f4f4f4">2:49 PM</text>
</svg>
</body></html>
